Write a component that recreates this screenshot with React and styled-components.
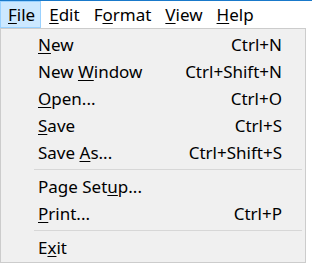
import React from "react";
import styled, { createGlobalStyle } from "styled-components";

const GlobalStyle = createGlobalStyle`
  html, body {
    margin: 0;
    padding: 0;
    background: #ffffff;
  }
  body {
    font-family: "Noto Sans", "Open Sans", sans-serif;
    font-size: 17px;
    color: #000000;
  }
`;

const Window = styled.div`
  width: 312px;
  height: 270px;
  border-top: 1px solid #1979ca;
  box-sizing: border-box;
  background: #ffffff;
`;

const MenuBar = styled.div`
  display: flex;
  align-items: stretch;
  height: 27px;
`;

const MenuTitle = styled.div`
  display: flex;
  align-items: center;
  padding: 0 5px 0 7px;
  box-sizing: border-box;
  border: 1px solid ${(p) => (p.$open ? "#99d1ff" : "transparent")};
  background: ${(p) => (p.$open ? "#cce8ff" : "transparent")};
`;

const Dropdown = styled.div`
  width: 306px;
  box-sizing: border-box;
  border: 1px solid #cccccc;
  background: #f0f0f0;
  padding: 2px 0 1px;
`;

const Item = styled.div`
  display: flex;
  justify-content: space-between;
  align-items: center;
  height: 27px;
  padding: 0 23px 0 37px;
`;

const Shortcut = styled.span`
  white-space: nowrap;
`;

const Separator = styled.div`
  height: 1px;
  margin: 3px 3px 3px 33px;
  background: #d7d7d7;
`;

const Key = styled.span`
  text-decoration: underline;
  text-decoration-thickness: 1px;
  text-underline-offset: 2px;
`;

const Label = ({ text, at }) => (
  <span>
    {text.slice(0, at)}
    <Key>{text[at]}</Key>
    {text.slice(at + 1)}
  </span>
);

const menus = [
  { text: "File", at: 0, open: true },
  { text: "Edit", at: 0 },
  { text: "Format", at: 1 },
  { text: "View", at: 0 },
  { text: "Help", at: 0 },
];

const entries = [
  { text: "New", at: 0, key: "Ctrl+N" },
  { text: "New Window", at: 4, key: "Ctrl+Shift+N" },
  { text: "Open...", at: 0, key: "Ctrl+O" },
  { text: "Save", at: 0, key: "Ctrl+S" },
  { text: "Save As...", at: 5, key: "Ctrl+Shift+S" },
  "sep",
  { text: "Page Setup...", at: 8 },
  { text: "Print...", at: 0, key: "Ctrl+P" },
  "sep",
  { text: "Exit", at: 1 },
];

const App = () => (
  <>
    <GlobalStyle />
    <Window>
      <MenuBar>
        {menus.map((m) => (
          <MenuTitle key={m.text} $open={m.open}>
            <Label text={m.text} at={m.at} />
          </MenuTitle>
        ))}
      </MenuBar>
      <Dropdown>
        {entries.map((e, i) =>
          e === "sep" ? (
            <Separator key={i} />
          ) : (
            <Item key={e.text}>
              <Label text={e.text} at={e.at} />
              {e.key && <Shortcut>{e.key}</Shortcut>}
            </Item>
          )
        )}
      </Dropdown>
    </Window>
  </>
);

export default App;
